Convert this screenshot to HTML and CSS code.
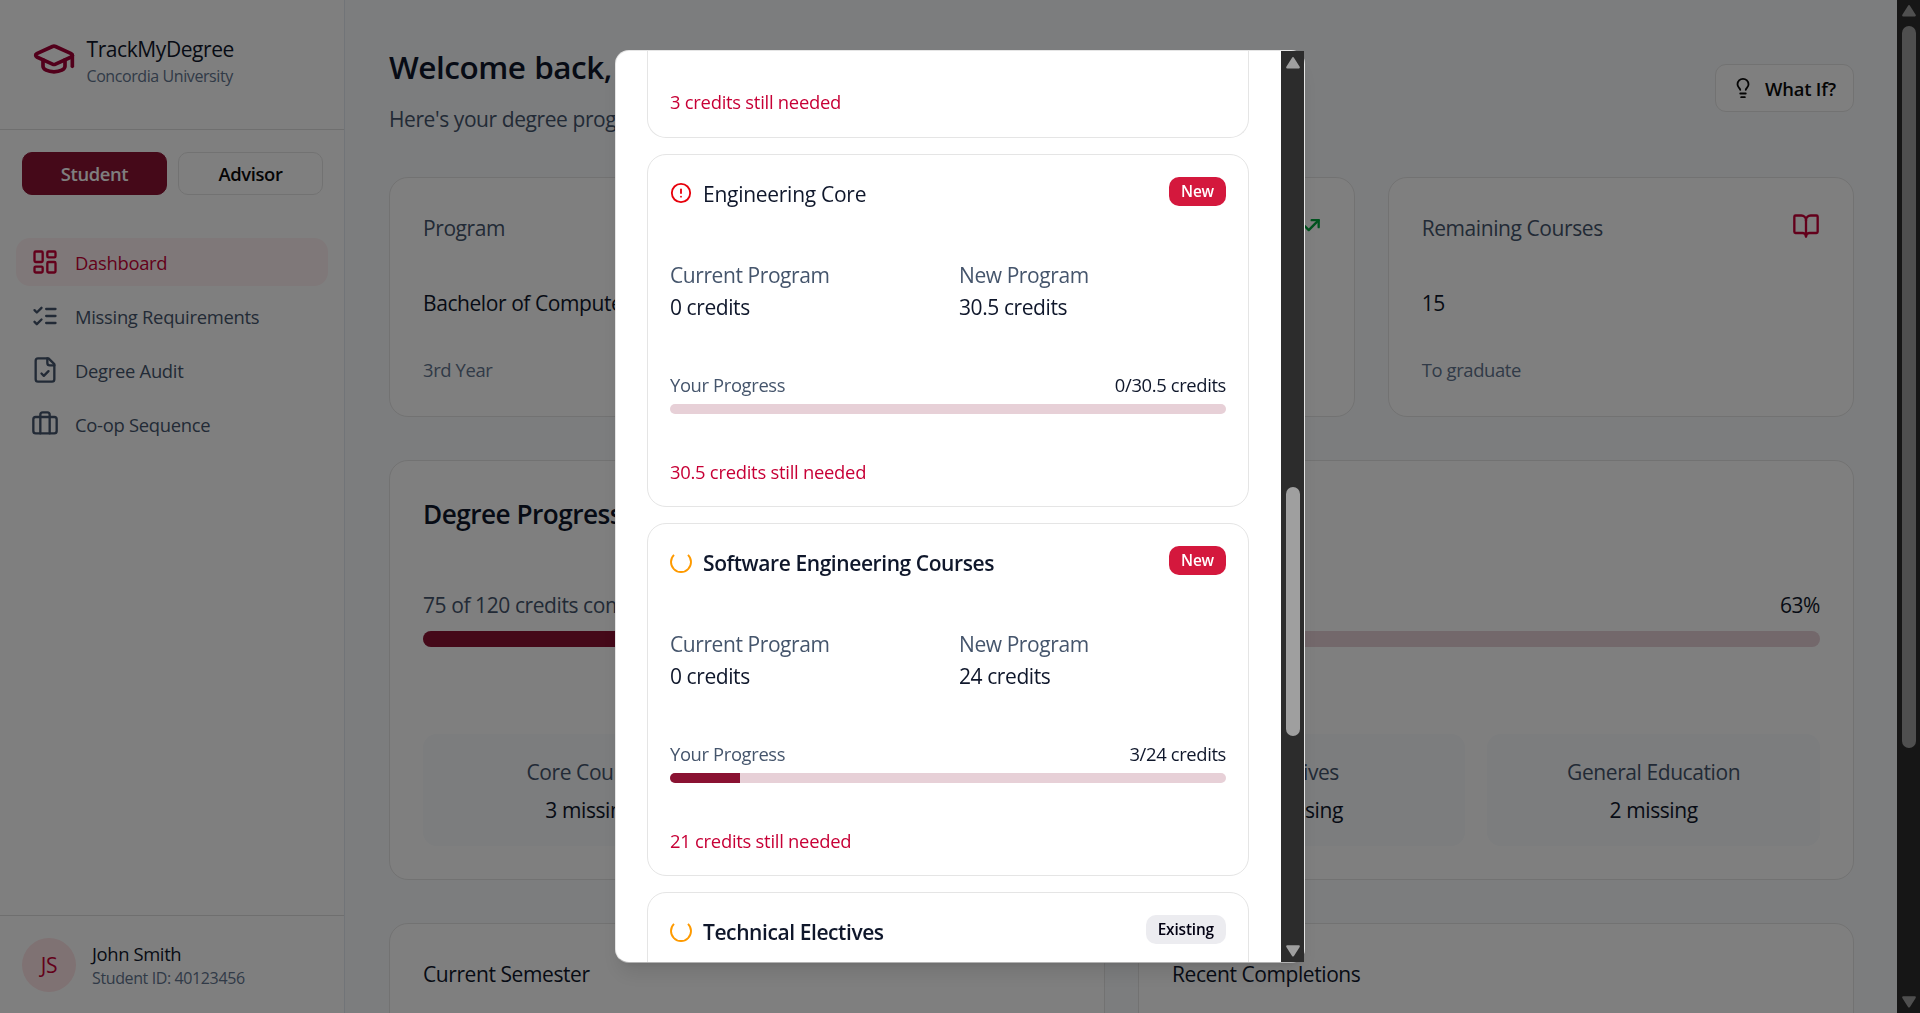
FILE: index.html
```html
<!DOCTYPE html>
<html lang="en">
<head>
<meta charset="utf-8">
<title>TrackMyDegree</title>
<link rel="stylesheet" href="styles.css">
</head>
<body>
<div class="app">
  <aside class="sidebar">
    <div class="brand">
      <svg class="icon brand-icon" viewBox="0 0 24 24"><path d="M21.42 10.922a1 1 0 0 0-.019-1.838L12.83 5.18a2 2 0 0 0-1.66 0L2.6 9.08a1 1 0 0 0 0 1.832l8.57 3.908a2 2 0 0 0 1.66 0z"/><path d="M22 10v6"/><path d="M6 12.5V16a6 3 0 0 0 12 0v-3.5"/></svg>
      <div>
        <div class="brand-name">TrackMyDegree</div>
        <div class="brand-sub">Concordia University</div>
      </div>
    </div>
    <div class="roles">
      <button class="role role-active">Student</button>
      <button class="role">Advisor</button>
    </div>
    <nav class="nav">
      <a class="nav-item nav-active"><svg class="icon" viewBox="0 0 24 24"><rect width="7" height="9" x="3" y="3" rx="1"/><rect width="7" height="5" x="14" y="3" rx="1"/><rect width="7" height="9" x="14" y="12" rx="1"/><rect width="7" height="5" x="3" y="16" rx="1"/></svg>Dashboard</a>
      <a class="nav-item"><svg class="icon" viewBox="0 0 24 24"><path d="m3 17 2 2 4-4"/><path d="m3 7 2 2 4-4"/><path d="M13 6h8"/><path d="M13 12h8"/><path d="M13 18h8"/></svg>Missing Requirements</a>
      <a class="nav-item"><svg class="icon" viewBox="0 0 24 24"><path d="M15 2H6a2 2 0 0 0-2 2v16a2 2 0 0 0 2 2h12a2 2 0 0 0 2-2V7Z"/><path d="M14 2v4a2 2 0 0 0 2 2h4"/><path d="m9 15 2 2 4-4"/></svg>Degree Audit</a>
      <a class="nav-item"><svg class="icon" viewBox="0 0 24 24"><path d="M16 20V4a2 2 0 0 0-2-2h-4a2 2 0 0 0-2 2v16"/><rect width="20" height="14" x="2" y="6" rx="2"/></svg>Co-op Sequence</a>
    </nav>
    <div class="user">
      <div class="avatar">JS</div>
      <div>
        <div class="user-name">John Smith</div>
        <div class="user-id">Student ID: 40123456</div>
      </div>
    </div>
  </aside>

  <main class="main">
    <header class="page-head">
      <div>
        <h1>Welcome back, John</h1>
        <p class="lead">Here's your degree progress</p>
      </div>
      <button class="what-if"><svg class="icon" viewBox="0 0 24 24"><path d="M15 14c.2-1 .7-1.7 1.5-2.5 1-.9 1.5-2.2 1.5-3.5A6 6 0 0 0 6 8c0 1 .2 2.2 1.5 3.5.7.7 1.3 1.5 1.5 2.5"/><path d="M9 18h6"/><path d="M10 22h4"/></svg>What If?</button>
    </header>

    <section class="stats">
      <div class="card">
        <div class="stat-head">Program</div>
        <div class="stat-value">Bachelor of Computer</div>
        <div class="stat-note">3rd Year</div>
      </div>
      <div class="card">
        <div class="stat-head"><span></span><svg class="icon trend" viewBox="0 0 24 24"><path d="M16 7h6v6"/><path d="m22 7-8.5 8.5-5-5L2 17"/></svg></div>
      </div>
      <div class="card">
        <div class="stat-head">Remaining Courses<svg class="icon book" viewBox="0 0 24 24"><path d="M12 7v14"/><path d="M3 18a1 1 0 0 1-1-1V4a1 1 0 0 1 1-1h5a4 4 0 0 1 4 4 4 4 0 0 1 4-4h5a1 1 0 0 1 1 1v13a1 1 0 0 1-1 1h-6a3 3 0 0 0-3 3 3 3 0 0 0-3-3z"/></svg></div>
        <div class="stat-value">15</div>
        <div class="stat-note">To graduate</div>
      </div>
    </section>

    <section class="card degree">
      <h2>Degree Progress</h2>
      <div class="degree-row"><span>75 of 120 credits completed</span><span class="strong">63%</span></div>
      <div class="bar bar-lg"><div class="bar-fill" style="width:62.5%"></div></div>
      <div class="tiles">
        <div class="tile">Core Courses<span class="strong">3 missing</span></div>
        <div class="tile"></div>
        <div class="tile">Electives<span class="strong">1 missing</span></div>
        <div class="tile">General Education<span class="strong">2 missing</span></div>
      </div>
    </section>

    <section class="lists">
      <div class="card">Current Semester</div>
      <div class="card">Recent Completions</div>
    </section>
  </main>

  <div class="scrollbar page-scroll">
    <svg class="arrow" viewBox="0 0 14 12"><path d="M7 2 12 10H2z"/></svg>
    <div class="thumb"></div>
    <svg class="arrow arrow-down" viewBox="0 0 14 12"><path d="M7 10 12 2H2z"/></svg>
  </div>
</div>

<div class="overlay">
  <div class="dialog">
    <div class="reqs">
      <article class="req req-cut">
        <p class="needed">3 credits still needed</p>
      </article>

      <article class="req">
        <div class="req-head">
          <svg class="icon alert" viewBox="0 0 24 24"><circle cx="12" cy="12" r="10"/><path d="M12 8v4"/><path d="M12 16h.01"/></svg>
          <h3 class="plain">Engineering Core</h3><span class="badge badge-new">New</span>
        </div>
        <div class="compare">
          <div>Current Program<span class="strong">0 credits</span></div>
          <div>New Program<span class="strong">30.5 credits</span></div>
        </div>
        <div class="progress-row"><span>Your Progress</span><span class="strong">0/30.5 credits</span></div>
        <div class="bar"></div>
        <p class="needed">30.5 credits still needed</p>
      </article>

      <article class="req">
        <div class="req-head">
          <svg class="icon partial" viewBox="0 0 22 22"><path d="M4 3.9A10 10 0 1 0 18 3.9"/></svg>
          <h3>Software Engineering Courses</h3><span class="badge badge-new">New</span>
        </div>
        <div class="compare">
          <div>Current Program<span class="strong">0 credits</span></div>
          <div>New Program<span class="strong">24 credits</span></div>
        </div>
        <div class="progress-row"><span>Your Progress</span><span class="strong">3/24 credits</span></div>
        <div class="bar"><div class="bar-fill" style="width:12.5%"></div></div>
        <p class="needed">21 credits still needed</p>
      </article>

      <article class="req">
        <div class="req-head">
          <svg class="icon partial" viewBox="0 0 22 22"><path d="M4 3.9A10 10 0 1 0 18 3.9"/></svg>
          <h3>Technical Electives</h3><span class="badge">Existing</span>
        </div>
      </article>
    </div>
    <div class="scrollbar dialog-scroll">
      <svg class="arrow" viewBox="0 0 14 12"><path d="M7 2 12 10H2z"/></svg>
      <div class="thumb"></div>
      <svg class="arrow arrow-down" viewBox="0 0 14 12"><path d="M7 10 12 2H2z"/></svg>
    </div>
  </div>
</div>
</body>
</html>
```
FILE: styles.css
```css
* {
  box-sizing: border-box;
  margin: 0;
  padding: 0;
  letter-spacing: -0.02em;
}

html, body {
  height: 100%;
  overflow: hidden;
}

body {
  font: 400 21px/33px "Open Sans", "Noto Sans", sans-serif;
  color: #0f172b;
  background: #f8fafc;
}

h1, h2, h3, button { font-weight: 600; }
button { font-family: inherit; }

.icon {
  display: block;
  flex: none;
  width: 28px;
  height: 28px;
  fill: none;
  stroke: currentColor;
  stroke-width: 2;
  stroke-linecap: round;
  stroke-linejoin: round;
}

.strong { color: #0f172b; }

.app {
  display: flex;
  height: 1013px;
}

/* Sidebar */
.sidebar {
  display: flex;
  flex-direction: column;
  flex: none;
  width: 345px;
  background: #fff;
  border-right: 1px solid #e2e8f0;
}

.brand {
  display: flex;
  align-items: center;
  gap: 11px;
  height: 130px;
  padding: 0 0 12px 31.5px;
  border-bottom: 1px solid #dfdfdf;
}

.brand-icon {
  width: 44px;
  height: 44px;
  color: #a50036;
}

.brand-name {
  line-height: 35px;
}

.brand-sub {
  margin-top: -1px;
  font-size: 16px;
  line-height: 20px;
  letter-spacing: -0.026em;
  color: #62748e;
}

.roles {
  display: flex;
  gap: 11px;
  padding: 22px 21px 0 22px;
}

.role {
  flex: 1;
  height: 43px;
  font-size: 18.4px;
  letter-spacing: -0.02em;
  color: #0a0a0a;
  background: #fff;
  border: 1px solid #e5e5e5;
  border-radius: 10px;
}

.role-active {
  color: #fff;
  background: #8a1232;
  border-color: #8a1232;
}

.nav {
  display: flex;
  flex-direction: column;
  flex: 1;
  gap: 6px;
  padding: 43px 16px 0 16px;
}

.nav-item {
  display: flex;
  align-items: center;
  gap: 16px;
  height: 48px;
  padding-left: 15px;
  font-size: 18.4px;
  letter-spacing: -0.016em;
  color: #45556c;
  border-radius: 14px;
}

.nav-active {
  color: #c70036;
  background: #fff1f2;
}

.user {
  display: flex;
  align-items: center;
  gap: 16px;
  height: 98px;
  padding-left: 22px;
  border-top: 1px solid #dfdfdf;
}

.avatar {
  width: 54px;
  height: 54px;
  line-height: 55px;
  text-align: center;
  color: #c70036;
  background: #ffe4e6;
  border-radius: 50%;
}

.user-name {
  font-size: 18.4px;
  line-height: 27px;
}

.user-id {
  font-size: 16px;
  line-height: 22px;
  letter-spacing: -0.024em;
  color: #62748e;
}

/* Dashboard */
.main {
  flex: 1;
  padding: 44px 43px 0 44px;
  overflow: hidden;
}

.page-head {
  display: flex;
  justify-content: space-between;
  height: 133px;
}

h1 {
  font-size: 31.5px;
  line-height: 46px;
  letter-spacing: -0.015em;
  word-spacing: 1px;
}

.lead {
  margin-top: 13px;
  color: #45556c;
}

.what-if {
  display: flex;
  align-items: center;
  gap: 11px;
  width: 139px;
  height: 48px;
  margin-top: 20px;
  padding-left: 16px;
  font-size: 18.4px;
  letter-spacing: -0.01em;
  color: #0a0a0a;
  background: #fff;
  border: 1px solid #e5e5e5;
  border-radius: 11px;
}

.what-if .icon {
  width: 22px;
  height: 22px;
}

.card {
  padding: 34px 33px 32px;
  background: #fff;
  border: 1px solid #e5e5e5;
  border-radius: 19px;
}

.stats {
  display: grid;
  grid-template-columns: repeat(3, 1fr);
  gap: 33px;
  height: 240px;
}

.stat-head {
  display: flex;
  justify-content: space-between;
  color: #45556c;
}

.trend { color: #00a63e; }
.book { color: #c70036; }

.stat-value { margin-top: 42px; }

.stat-note {
  margin-top: 36px;
  font-size: 18.4px;
  line-height: 28px;
  color: #62748e;
}

.degree {
  height: 420px;
  margin-top: 43px;
}

h2 {
  font-size: 26.2px;
  line-height: 39px;
}

.degree-row {
  display: flex;
  justify-content: space-between;
  margin-top: 55px;
  color: #45556c;
}

.bar {
  height: 10px;
  background: #e7d0d7;
  border-radius: 5px;
  overflow: hidden;
}

.bar-lg {
  height: 16px;
  margin-top: 9px;
  border-radius: 8px;
}

.bar-fill {
  height: 100%;
  background: #8a1232;
}

.tiles {
  display: grid;
  grid-template-columns: repeat(4, 1fr);
  gap: 22px;
  margin-top: 87px;
}

.tile {
  display: flex;
  flex-direction: column;
  gap: 5px;
  height: 112px;
  padding-top: 22px;
  text-align: center;
  color: #45556c;
  background: #f8fafc;
  border-radius: 14px;
}

.lists {
  display: grid;
  grid-template-columns: 1fr 1fr;
  gap: 33px;
  height: 240px;
  margin-top: 43px;
}

/* Scrollbars */
.scrollbar {
  display: flex;
  flex-direction: column;
  align-items: center;
  flex: none;
  width: 23px;
  background: #2c2c2c;
}

.arrow {
  width: 16px;
  height: 13.7px;
  fill: #9f9f9f;
  stroke: #9f9f9f;
  stroke-width: 2;
  stroke-linejoin: round;
}

.arrow-down { margin-top: auto; }

.thumb {
  width: 14px;
  background: #9f9f9f;
  border-radius: 7px;
}

.page-scroll { padding: 4px 0; }

.page-scroll .thumb {
  height: 722px;
  margin-top: 8px;
}

.dialog-scroll { padding: 5px 0 4px; }

.dialog-scroll .thumb {
  height: 249px;
  margin-top: 417px;
}

/* Dialog */
.overlay {
  position: fixed;
  inset: 0;
  padding: 50px 0 0 615px;
  background: rgba(0, 0, 0, 0.5);
}

.dialog {
  display: flex;
  width: 690px;
  height: 913px;
  background: #fff;
  border: 1px solid rgba(0, 0, 0, 0.1);
  border-bottom-color: rgba(0, 0, 0, 0.3);
  border-radius: 14px;
  box-shadow: 0 14px 20px -4px rgba(0, 0, 0, 0.1), 0 5px 8px -5px rgba(0, 0, 0, 0.1);
}

.reqs {
  display: flex;
  flex-direction: column;
  flex: 1;
  gap: 16px;
  padding: 0 32px 0 31px;
  overflow: hidden;
}

.req {
  flex: none;
  height: 353px;
  padding: 22px;
  border: 1px solid #e5e5e5;
  border-radius: 19px;
}

.req-cut {
  height: 87px;
  padding-top: 0;
  border-top: 0;
  border-radius: 0 0 19px 19px;
}

.req-head {
  display: flex;
  gap: 11px;
}

.req-head .icon {
  width: 22px;
  height: 22px;
  margin-top: 5px;
}

.req-head .alert { color: #e7000b; }

.req-head .partial {
  color: #fe9a00;
  stroke-width: 1.9;
  stroke-linecap: butt;
}

h3 {
  flex: 1;
  font-size: 21px;
  line-height: 35px;
}

.plain {
  font-weight: 400;
  letter-spacing: -0.013em;
}

.badge {
  height: 29px;
  padding: 0 12px;
  font-size: 15.4px;
  font-weight: 600;
  line-height: 30px;
  letter-spacing: -0.01em;
  color: #030213;
  background: #ececf0;
  border-radius: 10px;
}

.badge-new {
  color: #fff;
  background: #d4183d;
}

.compare {
  display: grid;
  grid-template-columns: 1fr 1fr;
  gap: 22px;
  margin-top: 47px;
  line-height: 32px;
  color: #45556c;
}

.compare .strong { display: block; }

.progress-row {
  display: flex;
  justify-content: space-between;
  margin: 48px 0 6px;
  font-size: 18.4px;
  line-height: 27px;
  color: #45556c;
}

.needed {
  margin-top: 44px;
  font-size: 18.4px;
  line-height: 27px;
  letter-spacing: -0.014em;
  color: #c70036;
}

.req-cut .needed { margin-top: 37px; }
```
